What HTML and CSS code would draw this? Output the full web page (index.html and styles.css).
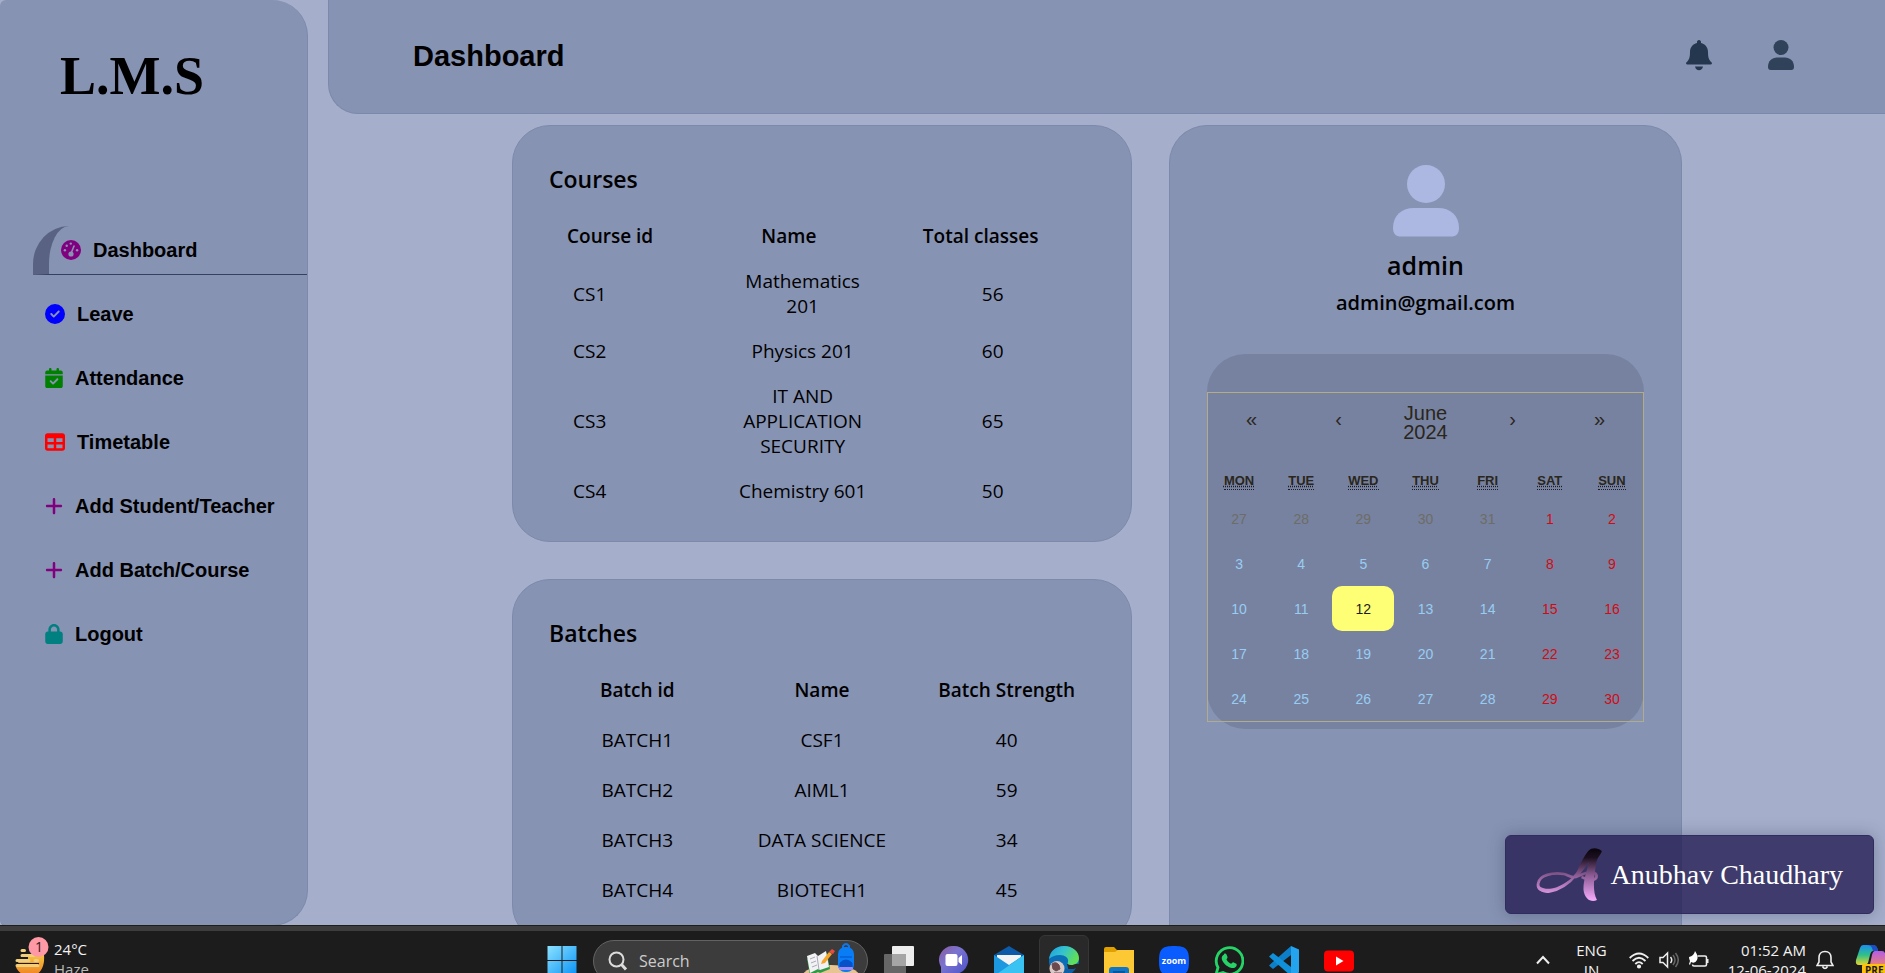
FILE: index.html
```html
<!DOCTYPE html>
<html lang="en">
<head>
<meta charset="utf-8">
<title>L.M.S Dashboard</title>
<link rel="stylesheet" href="styles.css">
</head>
<body>
<div class="app">
  <aside class="sidebar">
    <h1 class="brand">L.M.S</h1>
    <nav class="menu">
      <a class="menu-item active" href="#"><svg class="ico" viewBox="0 0 20 20"><circle cx="10" cy="10" r="10" fill="#800080"/><g fill="#8793b3"><circle cx="3.9" cy="10.2" r="1.2"/><circle cx="5.7" cy="5.7" r="1.2"/><circle cx="9.8" cy="3.6" r="1.2"/><circle cx="16.1" cy="10.2" r="1.2"/><circle cx="10" cy="14" r="2.6"/></g><path d="M10.2 13 13 6" stroke="#8793b3" stroke-width="1.6" stroke-linecap="round"/></svg>Dashboard</a>
      <a class="menu-item" href="#"><svg class="ico" viewBox="0 0 512 512" fill="#0000ff"><path d="M256 512A256 256 0 1 0 256 0a256 256 0 1 0 0 512zM369 209L241 337c-9.400 9.400-24.600 9.400-33.900 0l-64-64c-9.400-9.400-9.400-24.600 0-33.900s24.600-9.400 33.900 0l47 47L335 175c9.400-9.400 24.600-9.400 33.900 0s9.400 24.600 0 33.900z"/></svg>Leave</a>
      <a class="menu-item" href="#"><svg class="ico narrow" viewBox="0 0 448 512" fill="#008000"><path d="M128 0c17.700 0 32 14.300 32 32V64H288V32c0-17.700 14.300-32 32-32s32 14.300 32 32V64h48c26.500 0 48 21.500 48 48v48H0V112C0 85.500 21.500 64 48 64H96V32c0-17.700 14.300-32 32-32zM0 192H448V464c0 26.500-21.500 48-48 48H48c-26.500 0-48-21.500-48-48V192zM329 305c9.400-9.400 9.400-24.600 0-33.900s-24.600-9.400-33.900 0l-95 95-47-47c-9.400-9.400-24.600-9.400-33.900 0s-9.400 24.600 0 33.900l64 64c9.400 9.400 24.600 9.400 33.900 0L329 305z"/></svg>Attendance</a>
      <a class="menu-item" href="#"><svg class="ico" viewBox="0 0 512 512" fill="#ff0000"><path d="M64 256V160H224v96H64zm0 64H224v96H64V320zm224 96V320H448v96H288zM448 256H288V160H448v96zM64 32C28.700 32 0 60.700 0 96V416c0 35.300 28.700 64 64 64H448c35.300 0 64-28.700 64-64V96c0-35.300-28.700-64-64-64H64z"/></svg>Timetable</a>
      <a class="menu-item" href="#"><svg class="ico narrow" viewBox="0 0 448 512" fill="#800080"><path d="M256 80c0-17.700-14.300-32-32-32s-32 14.300-32 32V224H48c-17.700 0-32 14.300-32 32s14.300 32 32 32H192V432c0 17.700 14.300 32 32 32s32-14.300 32-32V288H400c17.700 0 32-14.300 32-32s-14.300-32-32-32H256V80z"/></svg>Add Student/Teacher</a>
      <a class="menu-item" href="#"><svg class="ico narrow" viewBox="0 0 448 512" fill="#800080"><path d="M256 80c0-17.700-14.300-32-32-32s-32 14.300-32 32V224H48c-17.700 0-32 14.300-32 32s14.300 32 32 32H192V432c0 17.700 14.300 32 32 32s32-14.300 32-32V288H400c17.700 0 32-14.300 32-32s-14.300-32-32-32H256V80z"/></svg>Add Batch/Course</a>
      <a class="menu-item" href="#"><svg class="ico narrow" viewBox="0 0 448 512" fill="#008080"><path d="M144 144v48H304V144c0-44.200-35.800-80-80-80s-80 35.800-80 80zM80 192V144C80 64.500 144.500 0 224 0s144 64.500 144 144v48h16c35.300 0 64 28.700 64 64V448c0 35.300-28.700 64-64 64H64c-35.300 0-64-28.700-64-64V256c0-35.300 28.700-64 64-64H80z"/></svg>Logout</a>
    </nav>
  </aside>

  <div class="page">
    <header class="topbar">
      <h2 class="topbar-title">Dashboard</h2>
      <div class="topbar-actions">
        <button class="icon-btn" aria-label="Notifications"><svg viewBox="0 0 28 32" width="28" height="32" fill="#25374e"><path d="M14 1c1.300 0 2 1 2 2v1c4.300 1 7 4.500 7 9 0 6 1 8 3.500 10.300.800 1 .500 2.200-.800 2.200H2.300c-1.300 0-1.600-1.200-.800-2.200C4 21 5 19 5 13c0-4.500 2.700-8 7-9V3c0-1 .700-2 2-2z"/><path d="M10 27.500h8c-.500 2.500-2 3.700-4 3.700s-3.500-1.200-4-3.700z"/></svg></button>
        <button class="icon-btn" aria-label="Account"><svg viewBox="0 0 28 32" width="28" height="32" fill="#2f425a"><circle cx="14" cy="8.500" r="7.500"/><path d="M1 28c0-6 4-9.500 9-9.500h8c5 0 9 3.500 9 9.500 0 2-1 3-2.500 3h-21C2 31 1 30 1 28z"/></svg></button>
      </div>
    </header>

    <main class="content">
      <div class="lists">
        <section class="card">
          <h3 class="card-title">Courses</h3>
          <table class="table courses">
            <thead><tr><th>Course id</th><th>Name</th><th>Total classes</th></tr></thead>
            <tbody>
              <tr><td>CS1</td><td>Mathematics 201</td><td>56</td></tr>
              <tr><td>CS2</td><td>Physics 201</td><td>60</td></tr>
              <tr><td>CS3</td><td>IT AND APPLICATION SECURITY</td><td>65</td></tr>
              <tr><td>CS4</td><td>Chemistry 601</td><td>50</td></tr>
            </tbody>
          </table>
        </section>
        <section class="card">
          <h3 class="card-title">Batches</h3>
          <table class="table batches">
            <thead><tr><th>Batch id</th><th>Name</th><th>Batch Strength</th></tr></thead>
            <tbody>
              <tr><td>BATCH1</td><td>CSF1</td><td>40</td></tr>
              <tr><td>BATCH2</td><td>AIML1</td><td>59</td></tr>
              <tr><td>BATCH3</td><td>DATA SCIENCE</td><td>34</td></tr>
              <tr><td>BATCH4</td><td>BIOTECH1</td><td>45</td></tr>
            </tbody>
          </table>
        </section>
      </div>

      <section class="card profile">
        <svg class="avatar" viewBox="0 0 68 72" fill="#adb8e2"><circle cx="34" cy="19" r="19"/><path d="M1 63c0-13 9-20 21-20h24c12 0 21 7 21 20 0 6-3 8.500-8 8.500H9C4 71.500 1 69 1 63z"/></svg>
        <h3 class="profile-name">admin</h3>
        <p class="profile-mail">admin@gmail.com</p>
        <div class="calendar-box">
          <div class="calendar">
            <div class="cal-nav">
              <button class="arrow" aria-label="Previous year">«</button><button class="arrow" aria-label="Previous month">‹</button><button>June 2024</button><button class="arrow" aria-label="Next month">›</button><button class="arrow" aria-label="Next year">»</button>
            </div>
            <div class="cal-week">
              <span><abbr>Mon</abbr></span><span><abbr>Tue</abbr></span><span><abbr>Wed</abbr></span><span><abbr>Thu</abbr></span><span><abbr>Fri</abbr></span><span><abbr>Sat</abbr></span><span><abbr>Sun</abbr></span>
            </div>
            <div class="cal-days">
              <button class="out">27</button><button class="out">28</button><button class="out">29</button><button class="out">30</button><button class="out">31</button><button class="off">1</button><button class="off">2</button>
              <button>3</button><button>4</button><button>5</button><button>6</button><button>7</button><button class="off">8</button><button class="off">9</button>
              <button>10</button><button>11</button><button class="today">12</button><button>13</button><button>14</button><button class="off">15</button><button class="off">16</button>
              <button>17</button><button>18</button><button>19</button><button>20</button><button>21</button><button class="off">22</button><button class="off">23</button>
              <button>24</button><button>25</button><button>26</button><button>27</button><button>28</button><button class="off">29</button><button class="off">30</button>
            </div>
          </div>
        </div>
      </section>
    </main>
  </div>

  <div class="signature">
    <svg width="68" height="54" viewBox="0 0 70 56" fill="none"><defs><linearGradient id="ink" gradientUnits="userSpaceOnUse" x1="0" y1="2" x2="0" y2="54"><stop offset="0" stop-color="#0c0610"/><stop offset=".15" stop-color="#1c1020"/><stop offset=".5" stop-color="#8a5a92"/><stop offset="1" stop-color="#f3a9fa"/></linearGradient></defs><path d="M60 5C54 9 50 18 43 27 35 37 27 43 15 45 7 46 2 42 3 37 4 28 18 25 30 27c4 1 7 4 11 3 6-1 12-6 18-5 6 1 6 7 1 8-5 1-9-2-12-3" stroke="url(#ink)" stroke-width="2.800"/><path d="M55 3c4-4 10-3 14 0 0 3-5 6-6 14-2 13-4 28 1 37-6 3-13-1-14-11 0-11 4-21 6-29-5 7-10 15-14 18-2-2 7-22 13-29zM2 35c-2 8 5 13 14 10 9-2 17-8 23-14-8 5-15 10-22 11-8 1-14-1-15-7z" fill="url(#ink)"/></svg>
    <span>Anubhav Chaudhary</span>
  </div>
</div>

<footer class="taskbar">
  <div class="weather">
    <svg width="38" height="44" viewBox="0 0 38 44"><defs><linearGradient id="sun" x1="0" y1="0" x2="0" y2="1"><stop offset="0" stop-color="#f5c443"/><stop offset="1" stop-color="#f08020"/></linearGradient></defs><path d="M10 19h22c1 12-4 21-14 21-7 0-12-4-14-9z" fill="url(#sun)"/><path d="M4 22h12M4 28h23" stroke="#1c1c1c" stroke-width="2"/><path d="M10 14.500h2.500M10 19.500h12M5 24.500h12M23 24.500h2.500M5 29.500h21" stroke="#f1cf7c" stroke-width="3" stroke-linecap="round"/><circle cx="26.500" cy="11" r="10" fill="#ff99a5"/><text x="23" y="16" class="badge-num">1</text></svg>
    <p>24°C<br><span>Haze</span></p>
  </div>
  <div class="apps">
    <svg class="app-ico" viewBox="0 0 30 30"><defs><linearGradient id="win" x1="0" y1="0" x2="1" y2="1"><stop offset="0" stop-color="#8be2ff"/><stop offset="1" stop-color="#0a92f5"/></linearGradient></defs><path d="M1 0h13.500v14H.500V0zM15.500 0H29.500v14H15.500zM.500 15h14v14H.500zM15.500 15h14v14h-14z" fill="url(#win)"/></svg>
    <label class="search"><svg width="20" height="20" viewBox="0 0 20 20" fill="none" stroke="#dcdcdc" stroke-width="2"><circle cx="8.500" cy="8.500" r="7"/><path d="M13.500 13.500 18 18.500" stroke-width="3"/></svg><input type="search" placeholder="Search" aria-label="Search"><svg width="60" height="36" viewBox="0 0 60 36"><ellipse cx="30" cy="34" rx="29" ry="12" fill="#e8c493"/><path d="M6 16 14 12 17 14 26 10 29 26 19 30 17 29 9 33z" fill="#2f9a45"/><path d="M6 13 14 10 17 13 25 8 28 24 19 27 17 26 9 30z" fill="#f2f2f5"/><path d="M16 13 18 27M9 16l5-2M10 20l5-2M11 24l5-2" stroke="#a9a9b8" fill="none"/><path d="m21 18 7-9 3 2-7 9-4 1z" fill="#f7a529"/><path d="m28 9 3-3 3 2-2 3z" fill="#e94b3c"/><path d="M42 6V3q3-4 6 0v3" stroke="#1276e8" stroke-width="2" fill="none"/><rect x="37" y="4" width="16" height="25" rx="7" fill="#087df5"/><path d="M39 14h12M39 20q6-6 12 0v6H39z" fill="#0650c8" stroke="#0650c8"/><rect x="38" y="24" width="14" height="3" rx="1" fill="#a18bf5"/></svg></label>
    <svg class="app-ico" viewBox="0 0 30 30"><rect x="8" y="0" width="22" height="20" rx="1" fill="#ededed"/><rect x="0" y="8" width="22" height="22" rx="1" fill="#6f6f6f" fill-opacity=".9"/><path d="M8 8h14v12H8z" fill="#a5a5a5"/></svg>
    <svg class="app-ico" viewBox="0 0 30 30"><defs><linearGradient id="chat" x1="0" y1="0" x2="1" y2="1"><stop offset="0" stop-color="#8a5a9c"/><stop offset=".4" stop-color="#7a74d0"/><stop offset="1" stop-color="#4a4fc9"/></linearGradient></defs><path d="M15 0a14 14 0 1 1-5 27L2 30V21A14 14 0 0 1 15 0z" fill="url(#chat)"/><rect x="6.500" y="8" width="12" height="12" rx="2" fill="#fff"/><path d="M19.500 12 23 9v10l-3.500-3z" fill="#fff"/></svg>
    <svg class="app-ico" viewBox="0 0 30 30"><path d="M0 9 15 0 30 9v5H0z" fill="#0d5ba8"/><path d="M3 9h24v12H3z" fill="#f3f3f3"/><path d="M0 9 15 19 30 9v21H0z" fill="#1b98e0"/><path d="M0 30 30 9v21z" fill="#38c3f2"/></svg>
    <span class="app-current"><svg class="app-ico" viewBox="0 0 30 30"><defs><linearGradient id="edge" x1="0" y1="0" x2="1" y2=".4"><stop offset="0" stop-color="#1a9fe0"/><stop offset=".5" stop-color="#35c1cf"/><stop offset="1" stop-color="#5fe05a"/></linearGradient></defs><circle cx="15" cy="15" r="15" fill="#0b6fb8"/><path d="M18 18h12v5l-5 5-5-2z" fill="#292929"/><path d="M0 13C1 5 7 0 15 0c9 0 15 6 15 12 0 5-4 7-8 7-3 0-4-1-3-3 1-4-3-7-8-7-5 0-9 2-11 4z" fill="url(#edge)"/><path d="M12 14c-1 6 4 9 9 9 3 0 5 0 6-1-3 6-9 8-15 8z" fill="#0f5fa6"/><circle cx="8" cy="22.500" r="7.500" fill="#d9c9c6"/><path d="M3 18q4-3 7 1l1 4-4 2-3-2zM5 27h8" fill="#6a4a4e" stroke="#6a4a4e"/></svg></span>
    <svg class="app-ico" viewBox="0 0 30 30"><path d="M0 3q0-2 2-2h8l3 3h15q2 0 2 2v6H0z" fill="#e0a100"/><path d="M0 6h11l3-2h16v26H0z" fill="#fcc935"/><rect x="5" y="21" width="20" height="9" rx="3" fill="#1276c6"/><path d="M9 26h12" stroke="#0a4c8c" stroke-width="1.500"/></svg>
    <svg class="app-ico" viewBox="0 0 30 30"><path d="M15 0c12 0 15 3 15 15s-3 15-15 15S0 27 0 15 3 0 15 0z" fill="#0b5cff"/><text x="15" y="18" class="zoom-word">zoom</text></svg>
    <svg class="app-ico" viewBox="0 0 30 30"><path d="M2 28.500 4 21.500A13.300 13.300 0 1 1 9 26.500z" fill="none" stroke="#25d366" stroke-width="2.800"/><path d="M10 8c1-.700 2-.500 2.500.500l1 2.500c.300 1-1 2-1 2.500 1 2 2.500 3.500 4.500 4.300.700 0 1.500-1.700 2.300-1.500l3 1.400c.700.300.500 1.500 0 2.500-1 1.800-3.500 2.300-5.500 1.600-4.500-1.400-8-5-9-8.800-.400-2 .700-3.800 2.200-4.500z" fill="#25d366"/></svg>
    <svg class="app-ico" viewBox="0 0 30 30"><path d="M22 0 30 3.500v23L22 30z" fill="#24a4ee"/><path d="M22 0v9L4 23 0 19.500z" fill="#0d7fc9"/><path d="M22 30v-9L4 7 0 10.500z" fill="#1190da"/></svg>
    <svg class="app-ico" viewBox="0 0 30 30"><rect x="0" y="4.500" width="30" height="21" rx="4" fill="#ff0000"/><path d="M12 10.500v9l7.500-4.500z" fill="#fff"/></svg>
  </div>
  <div class="tray">
    <svg width="16" height="10" viewBox="0 0 16 10"><path d="M2 8.500 8 2l6 6.500" fill="none" stroke="#eee" stroke-width="2"/></svg>
    <p class="lang">ENG<br>IN</p>
    <div class="status">
      <svg width="20" height="18" viewBox="0 0 20 18" fill="none" stroke="#eee" stroke-width="1.800"><path d="M.700 7q9.300-9 18.600 0M3.500 10q6.500-6.500 13 0M6.300 13q3.700-3.700 7.400 0"/><circle cx="10" cy="15.500" r="1.200" fill="#eee"/></svg>
      <svg width="20" height="18" viewBox="0 0 20 18" fill="none" stroke="#eee" stroke-width="1.500"><path d="M1 6.500h3l4.500-4.500v14L4 11.500H1z"/><path d="M11.500 6q2.500 3 0 6"/><path d="M14 4q4 5 0 10M16.500 2q5.500 7 0 14" stroke="#666"/></svg>
      <svg width="20" height="18" viewBox="0 0 20 18"><path d="M8.500 5H16q1.500 0 1.500 1.500v7q0 1.500-1.500 1.500H5q-1.500 0-1.500-1.500" fill="none" stroke="#eee" stroke-width="1.600"/><path d="M18.500 8v4" stroke="#eee" stroke-width="2"/><path d="M0 6q5-1 6-6 4 6 2 9-2 4-6 2l-1 3-1-1 1-3q-1-2-1-4z" fill="#fff"/></svg>
    </div>
    <p class="clock">01:52 AM<br>12-06-2024</p>
    <svg class="tray-bell" width="18" height="20" viewBox="0 0 18 20" fill="none" stroke="#eee" stroke-width="1.600"><path d="M9 1.500c-4 0-6 3-6 6V12l-2 3.500h16L15 12V7.500c0-3-2-6-6-6zM6.500 16.500q2.500 4 5 0"/></svg>
    <svg width="30" height="34" viewBox="0 0 30 34"><defs><linearGradient id="cp1" x1="0" y1="0" x2="0" y2="1"><stop offset="0" stop-color="#1a8ef0"/><stop offset=".5" stop-color="#2fc08a"/><stop offset="1" stop-color="#e8d52c"/></linearGradient><linearGradient id="cp2" x1="0" y1="0" x2="0" y2="1"><stop offset="0" stop-color="#b55be8"/><stop offset="1" stop-color="#f58a5a"/></linearGradient></defs><path d="M8 2h10q4 0 5 6h-5q-2 0-3 4l-2 8q-1 2-4 2H4q-4 0-3-5L5 5q1-3 3-3z" fill="url(#cp1)"/><path d="M12 2h7q3 0 4 6h-5l-1-3q-1-3-5-3z" fill="#1c4fc4"/><path d="M20 8h7q4 0 3 6v12H14l3-14q1-4 3-4z" fill="url(#cp2)"/><rect x="7" y="21" width="26" height="13" rx="2" fill="#ffc20a"/><text x="10" y="31" class="pre">PRE</text></svg>
  </div>
</footer>
</body>
</html>
```
FILE: styles.css
```css
* { box-sizing: border-box; }

body {
  margin: 0;
  height: 100vh;
  overflow: hidden;
  display: flex;
  flex-direction: column;
  background: #a5aeca;
  color: #000;
  font-family: "Open Sans", "Noto Sans", sans-serif;
}

button {
  border: 0;
  padding: 0;
  background: none;
  color: inherit;
  font: inherit;
}

h1, h2, h3, p { margin: 0; }

.app {
  flex: 1;
  min-height: 0;
  overflow: hidden;
  position: relative;
  display: flex;
  gap: 20px;
}

/* Sidebar */
.sidebar {
  flex: none;
  width: 308px;
  background: #8793b3;
  border: 1px solid #7c89ac;
  border-width: 0 1px 1px 0;
  border-radius: 6px 36px 36px 6px;
}

.brand {
  padding: 46px 0 0 60px;
  margin-bottom: 120px;
  font: bold 54px/60px "Liberation Serif", serif;
}

.menu {
  display: flex;
  flex-direction: column;
  padding-left: 33px;
}

.menu-item {
  display: flex;
  align-items: center;
  gap: 12px;
  height: 64px;
  padding-left: 12px;
  color: #000;
  font: bold 20px "Liberation Sans", Arial, sans-serif;
  text-decoration: none;
}

.menu-item.active {
  height: 49px;
  margin-bottom: 7px;
  border-left: 16px solid #596282;
  border-bottom: 1px solid #36415f;
  border-top-left-radius: 36px 38px;
}

.ico { flex: none; width: 20px; height: 20px; }
.ico.narrow { width: 18px; }

/* Top bar */
.page {
  flex: 1;
  min-width: 0;
  display: flex;
  flex-direction: column;
}

.topbar {
  flex: none;
  height: 114px;
  display: flex;
  justify-content: space-between;
  padding: 39px 90px 0 84px;
  background: #8793b3;
  border: 1px solid #7c89ac;
  border-width: 0 0 1px 1px;
  border-bottom-left-radius: 30px;
}

.topbar-title { font: bold 29px/34px "Liberation Sans", Arial, sans-serif; }
.topbar-actions { display: flex; align-items: flex-start; gap: 54px; }
.icon-btn { height: 32px; }

/* Cards */
.content {
  flex: 1;
  min-height: 0;
  display: grid;
  grid-template-columns: 620fr 513fr;
  gap: 37px;
  padding: 11px 203px 0 184px;
}

.lists {
  display: flex;
  flex-direction: column;
  gap: 37px;
}

.card {
  flex: none;
  padding: 36px 32px 27px;
  background: #8793b3;
  border: 1px solid #7c89ac;
  border-radius: 38px;
}

.card-title {
  padding-left: 4px;
  margin-bottom: 15px;
  font-size: 23px;
  font-weight: 600;
  line-height: 34px;
}

.table {
  width: 100%;
  table-layout: fixed;
  border-collapse: collapse;
  font-size: 19px;
  line-height: 25px;
  text-align: center;
}

.table th { font-weight: 600; padding: 10px 0; }
.table td { padding: 10px 0; }

.courses { margin-top: 18px; }
.courses th, .courses td { text-align: left; }
.courses th:nth-child(1) { width: 34%; padding-left: 22px; }
.courses th:nth-child(2) { width: 25%; padding-left: 28px; }
.courses th:nth-child(3) { padding-left: 51px; }
.courses td:nth-child(1) { padding-left: 28px; }
.courses td:nth-child(2) { text-align: center; }
.courses td:nth-child(3) { padding-left: 110px; }

.batches th, .batches td { height: 50px; }

/* Profile */
.profile {
  display: flex;
  flex-direction: column;
  align-items: center;
  padding: 39px 37px 0;
  border-bottom: 0;
  border-radius: 38px 38px 0 0;
}

.avatar { width: 68px; height: 72px; }

.profile-name {
  margin-top: 10px;
  font-size: 25px;
  font-weight: 600;
  line-height: 36px;
}

.profile-mail {
  margin-top: 6px;
  font-size: 20px;
  font-weight: 600;
  line-height: 28px;
}

.calendar-box {
  width: 100%;
  margin-top: 37px;
  padding: 38px 0 7px;
  background: #7782a0;
  border-radius: 38px;
}

.calendar {
  border: 1px solid #b3ac88;
  font-family: "Liberation Sans", Arial, sans-serif;
  color: #2a261c;
}

.cal-nav {
  display: grid;
  grid-template-columns: repeat(5, 1fr);
  height: 60px;
  margin-bottom: 14px;
  font-size: 20px;
  line-height: 19px;
}

.cal-nav .arrow { padding-bottom: 8px; }

.cal-week, .cal-days {
  display: grid;
  grid-template-columns: repeat(7, 1fr);
  text-align: center;
}

.cal-week {
  height: 29px;
  font-size: 13px;
  font-weight: bold;
  line-height: 28px;
  text-transform: uppercase;
}

.cal-week abbr {
  padding-bottom: 1px;
  border-bottom: 1px dotted #1c1c24;
  text-decoration: underline dotted #1c1c24;
}

.cal-days {
  grid-auto-rows: 45px;
  font-size: 14px;
  color: #98cdf3;
}

.cal-days .out { color: #6d6d66; }
.cal-days .off { color: #d10a14; }
.cal-days .today {
  background: #ffff76;
  border-radius: 10px;
  color: #1c1c1c;
}

/* Signature overlay */
.signature {
  position: absolute;
  right: 11px;
  bottom: 12px;
  display: flex;
  align-items: center;
  gap: 7px;
  height: 79px;
  padding: 0 30px 0 29px;
  background: rgba(32, 25, 79, .77);
  border: 1px solid #312c60;
  border-radius: 6px;
  box-shadow: 0 0 16px rgba(40, 50, 80, .35);
  color: #fff;
  font: 28px "Liberation Serif", serif;
}

/* Taskbar */
.taskbar {
  flex: none;
  height: 47px;
  overflow: hidden;
  display: flex;
  justify-content: space-between;
  align-items: flex-start;
  padding-left: 12px;
  background: #1c1c1c;
  border-top: 5px solid #3d3d3d;
  box-shadow: 0 -1px #1f1f18;
  position: relative;
  color: #f2f2f2;
  font-size: 15px;
  line-height: 20px;
}

.weather { display: flex; gap: 4px; padding-top: 5px; }
.weather p { padding-top: 3px; }
.weather span { color: #b9b9b9; }
.badge-num { font-size: 14px; fill: #30181c; }

.apps {
  display: flex;
  align-items: center;
  gap: 25px;
  height: 60px;
  margin-left: 277px;
}

.app-ico { flex: none; width: 30px; height: 30px; }

.app-current {
  display: flex;
  align-items: center;
  justify-content: center;
  width: 50px;
  height: 52px;
  margin: 0 -10px;
  background: #292929;
  border: 1px solid #363636;
  border-radius: 6px;
}

.search {
  display: flex;
  align-items: center;
  width: 275px;
  height: 42px;
  margin: 0 -9px;
  padding: 0 6px 0 14px;
  background: #3c3c3c;
  border: 1px solid #636363;
  border-radius: 22px;
}

.search input {
  flex: 1;
  min-width: 0;
  padding: 0 0 0 11px;
  background: none;
  border: 0;
  color: #ccc;
  font: 16px "Open Sans", sans-serif;
}

.search input::placeholder { color: #ccc; }
.zoom-word { font: bold 9px "Open Sans", sans-serif; fill: #fff; text-anchor: middle; }

.tray { display: flex; align-items: center; height: 58px; }
.lang { margin: 0 22px 0 25px; text-align: center; }
.status { display: flex; gap: 10px; }
.clock { margin: 0 10px 0 19px; text-align: right; }
.tray-bell { margin-right: 21px; }
.pre { font: bold 10px "Open Sans", sans-serif; fill: #1c1c1c; }
```
